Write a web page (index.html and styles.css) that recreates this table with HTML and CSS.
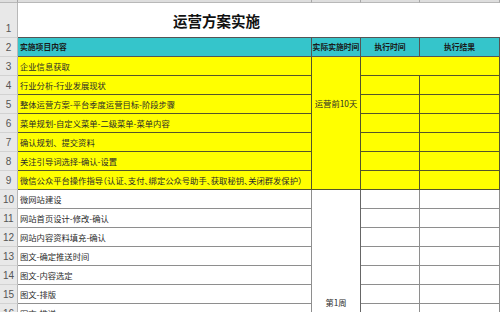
FILE: index.html
```html
<!DOCTYPE html>
<html lang="zh-CN">
<head>
<meta charset="utf-8">
<link rel="stylesheet" href="styles.css">
</head>
<body>
<div class="sheet">
  <div class="corner"></div>
  <div class="colhead"><span>A</span></div>
  <div class="colhead"><span>B</span></div>
  <div class="colhead"><span>C</span></div>
  <div class="colhead"><span>D</span></div>

  <div class="rh r1">1</div>
  <div class="title">运营方案实施</div>

  <div class="rh">2</div>
  <div class="cell hd left">实施项目内容</div>
  <div class="cell hd">实际实施时间</div>
  <div class="cell hd">执行时间</div>
  <div class="cell hd">执行结果</div>

  <div class="rh">3</div>
  <div class="cell y left">企业信息获取</div>
  <div class="cell y merge-c1">运营前10天</div>
  <div class="cell y span2"></div>

  <div class="rh">4</div>
  <div class="cell y left">行业分析-行业发展现状</div>
  <div class="cell y"></div>
  <div class="cell y"></div>

  <div class="rh">5</div>
  <div class="cell y left">整体运营方案-平台季度运营目标-阶段步骤</div>
  <div class="cell y"></div>
  <div class="cell y"></div>

  <div class="rh">6</div>
  <div class="cell y left">菜单规划-自定义菜单-二级菜单-菜单内容</div>
  <div class="cell y"></div>
  <div class="cell y"></div>

  <div class="rh">7</div>
  <div class="cell y left">确认规划、提交资料</div>
  <div class="cell y"></div>
  <div class="cell y"></div>

  <div class="rh">8</div>
  <div class="cell y left">关注引导词选择-确认-设置</div>
  <div class="cell y"></div>
  <div class="cell y"></div>

  <div class="rh">9</div>
  <div class="cell y left narrow">微信公众平台操作指导（认证、支付、绑定公众号助手、获取秘钥、关闭群发保护）</div>
  <div class="cell y"></div>
  <div class="cell y"></div>

  <div class="rh">10</div>
  <div class="cell w left">微网站建设</div>
  <div class="cell w merge-c2">第1周</div>
  <div class="cell w"></div>
  <div class="cell w"></div>

  <div class="rh">11</div>
  <div class="cell w left">网站首页设计-修改-确认</div>
  <div class="cell w"></div>
  <div class="cell w"></div>

  <div class="rh">12</div>
  <div class="cell w left">网站内容资料填充-确认</div>
  <div class="cell w"></div>
  <div class="cell w"></div>

  <div class="rh">13</div>
  <div class="cell w left">图文-确定推送时间</div>
  <div class="cell w"></div>
  <div class="cell w"></div>

  <div class="rh">14</div>
  <div class="cell w left">图文-内容选定</div>
  <div class="cell w"></div>
  <div class="cell w"></div>

  <div class="rh">15</div>
  <div class="cell w left">图文-排版</div>
  <div class="cell w"></div>
  <div class="cell w"></div>

  <div class="rh">16</div>
  <div class="cell w left">图文-推送</div>
  <div class="cell w"></div>
  <div class="cell w"></div>
</div>
</body>
</html>
```

FILE: styles.css
```css
html, body {
  margin: 0;
  padding: 0;
  background: #ffffff;
}
body {
  width: 500px;
  height: 312px;
  overflow: hidden;
  font-family: "Noto Sans CJK SC", "Noto Sans", sans-serif;
  color: #2a2a2a;
}
.sheet {
  display: grid;
  grid-template-columns: 18px 294px 49px 59px 80px;
  grid-template-rows: 3px 35px repeat(15, 19px);
}
.corner, .colhead {
  background: #dedede;
  border-bottom: 1px solid #b8b8b8;
  border-right: 1px solid #a8a8a8;
  box-sizing: border-box;
  overflow: hidden;
}
.colhead span {
  display: none;
}
.rh {
  background: #e8e8e8;
  border-right: 1px solid #b8b8b8;
  border-bottom: 1px solid #d2d2d2;
  box-sizing: border-box;
  display: flex;
  align-items: flex-end;
  justify-content: center;
  font-family: "Liberation Sans", sans-serif;
  font-size: 10px;
  line-height: 1;
  color: #555;
  padding-bottom: 3px;
}
.title {
  grid-column: span 4;
  border-bottom: 1px solid #555;
  box-sizing: border-box;
  display: flex;
  align-items: center;
  padding-left: 155px;
  font-size: 14.5px;
  font-weight: 700;
  color: #111;
}
.cell {
  box-sizing: border-box;
  border-right: 1px solid #555;
  border-bottom: 1px solid #555;
  display: flex;
  align-items: center;
  justify-content: center;
  font-size: 8.3px;
  line-height: 1;
  white-space: nowrap;
}
.left {
  justify-content: flex-start;
  padding-left: 2px;
}
.narrow {
  font-feature-settings: "halt";
}
.hd {
  background: #35c5cb;
  font-weight: 700;
  font-size: 7.8px;
  color: #1a1a1a;
}
.y {
  background: #ffff00;
  border-color: #55552a;
}
.w {
  background: #ffffff;
  border-color: #8e8e8e;
}
.merge-c1 {
  grid-row: span 7;
  align-items: flex-start;
  padding-top: 42px;
}
.merge-c2 {
  grid-row: span 7;
  align-items: flex-start;
  padding-top: 108px;
  border-right-color: #666;
}
.span2 {
  grid-column: span 2;
}
```
